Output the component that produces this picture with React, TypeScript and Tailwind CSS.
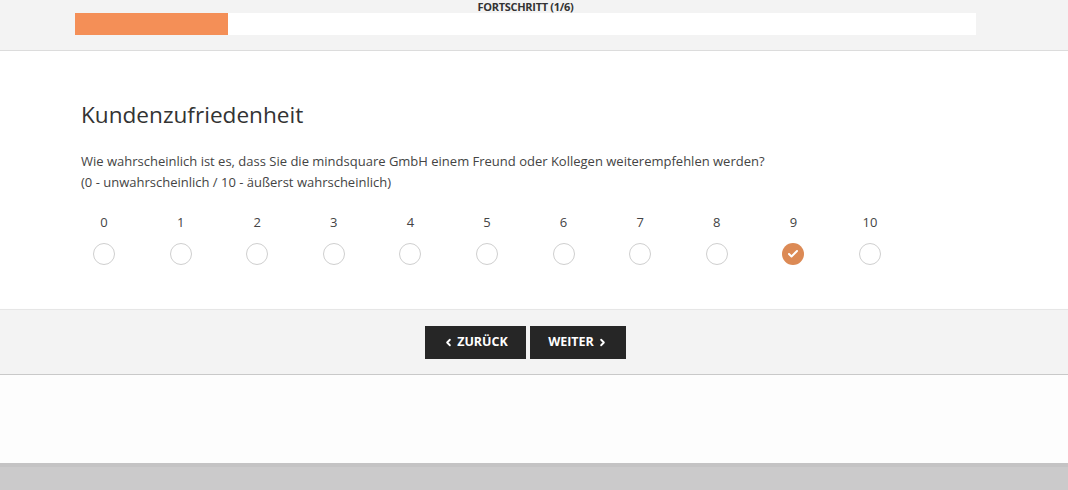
import { ChevronLeft, ChevronRight, Check } from "lucide-react";

const scale = [0, 1, 2, 3, 4, 5, 6, 7, 8, 9, 10];

export default function App() {
  const selected = 9;

  return (
    <div className="flex h-[490px] w-full flex-col overflow-hidden bg-[#fdfdfd] font-['Open_Sans',sans-serif] text-[#444]">
      {/* Progress header */}
      <header className="h-[51px] shrink-0 border-b border-[#dcdcdc] bg-[#f3f3f3] shadow-[0_1px_3px_rgba(0,0,0,0.06)]">
        <div className="pr-[17px] pt-[1px] text-center text-[11px] font-bold uppercase leading-[12px] tracking-[-0.3px] text-[#333]">
          Fortschritt (1/6)
        </div>
        <div className="mx-[75px] flex h-[22px] w-[901px] bg-white">
          <div className="h-full w-[153px] bg-[#f48f57]" />
        </div>
      </header>

      {/* Question */}
      <main className="h-[258px] shrink-0 bg-white px-[81px] pt-[50px]">
        <h1 className="text-[22.6px] leading-[28px] text-[#333]">Kundenzufriedenheit</h1>
        <p className="mt-[22px] text-[13px] leading-[21px] text-[#444]">
          Wie wahrscheinlich ist es, dass Sie die mindsquare GmbH einem Freund oder Kollegen weiterempfehlen werden?
          <br />
          (0 - unwahrscheinlich / 10 - äußerst wahrscheinlich)
        </p>
        <div className="mt-[20px] flex gap-[30.6px]">
          {scale.map((n) => (
            <div key={n} className="flex w-[46px] flex-col items-center">
              <span className="text-[13px] leading-[18px] text-[#444]">{n}</span>
              <span
                className={
                  n === selected
                    ? "mt-[12px] flex h-[22px] w-[22px] items-center justify-center rounded-full bg-[#dc8a55]"
                    : "mt-[12px] h-[22px] w-[22px] rounded-full border border-[#cfcfcf] bg-white"
                }
              >
                {n === selected && <Check className="h-[12px] w-[12px] text-white" strokeWidth={4} />}
              </span>
            </div>
          ))}
        </div>
      </main>

      {/* Navigation */}
      <footer className="flex h-[66px] shrink-0 items-center justify-center gap-[4px] border-y border-t-[#e6e6e6] border-b-[#c9c9c9] bg-[#f3f3f3] pr-[17px] shadow-[0_1px_2px_rgba(0,0,0,0.08)]">
        <button className="flex h-[33px] w-[101px] items-center justify-center gap-[3px] bg-[#262626] text-[12.5px] font-bold text-white">
          <ChevronLeft className="h-[11px] w-[11px]" strokeWidth={4} />
          ZURÜCK
        </button>
        <button className="flex h-[33px] w-[96px] items-center justify-center gap-[3px] bg-[#262626] text-[12.5px] font-bold text-white">
          WEITER
          <ChevronRight className="h-[11px] w-[11px]" strokeWidth={4} />
        </button>
      </footer>

      <div className="h-[88px] shrink-0 bg-[#fdfdfd]" />
      <div className="flex-1 border-t-[4px] border-[#c4c3c4] bg-[#cbcacb]" />
    </div>
  );
}
